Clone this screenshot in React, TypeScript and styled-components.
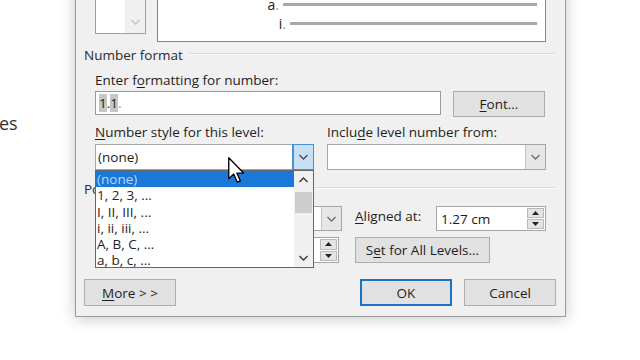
import React from 'react';
import styled, { createGlobalStyle } from 'styled-components';

const GlobalStyle = createGlobalStyle`
  html, body {
    margin: 0;
    padding: 0;
    background: #fff;
    overflow: hidden;
  }
  body {
    font-family: "Open Sans", "Noto Sans", "DejaVu Sans", sans-serif;
    font-size: 13.5px;
    color: #1a1a1a;
  }
  u {
    text-decoration-thickness: 1px;
    text-underline-offset: 2px;
  }
`;

const Page = styled.div`
  position: relative;
  display: flex;
  align-items: flex-start;
  width: 640px;
  height: 360px;
  overflow: hidden;
`;

const DocText = styled.div`
  width: 76px;
  margin-left: -1px;
  padding-top: 111px;
  font-size: 18px;
  color: #333;
`;

const Dialog = styled.div`
  width: 491px;
  margin-top: -40px;
  box-sizing: border-box;
  padding: 10px 9px 10px 8px;
  background: #f0f0f0;
  border: 1px solid #9b9b9b;
  box-shadow: 0 2px 14px rgba(0, 0, 0, 0.22);
  display: flex;
  flex-direction: column;
`;

const TopRow = styled.div`
  display: flex;
  align-items: flex-start;
  padding-left: 11px;
  gap: 11px;
`;

const LevelBox = styled.div`
  width: 51px;
  height: 63px;
  box-sizing: border-box;
  border: 1px solid #a0a0a0;
  background: #fff;
  display: flex;
  justify-content: flex-end;
`;

const LevelScroll = styled.div`
  width: 20px;
  background: #f0f0f0;
  display: flex;
  align-items: flex-end;
  justify-content: center;
  padding-bottom: 8px;
`;

const Preview = styled.div`
  width: 389px;
  height: 71px;
  box-sizing: border-box;
  border: 1px solid #858585;
  background: #fff;
  padding-top: 23px;
  display: flex;
  flex-direction: column;
`;

const PreviewRow = styled.div`
  display: flex;
  align-items: center;
  height: 19px;
`;

const Marker = styled.span<{ $w: number }>`
  width: ${(p) => p.$w}px;
  text-align: right;
  font-size: 14px;
  color: #222;
  span {
    color: #999;
  }
`;

const Bar = styled.div`
  flex: 1;
  height: 3px;
  margin-left: 4px;
  margin-right: 8px;
  background: #a8a8a8;
`;

const Heading = styled.div<{ $mt: number }>`
  display: flex;
  align-items: center;
  height: 18px;
  margin-top: ${(p) => p.$mt}px;
  margin-right: 1px;
  color: #2a2a2a;
  white-space: nowrap;

  &::after {
    content: '';
    flex: 1;
    height: 1px;
    margin-left: 6px;
    margin-top: -3px;
    background: #dadada;
    box-shadow: 0 1px 0 #fafafa;
  }
`;

const Label = styled.div<{ $mt?: number; $w?: number }>`
  height: 18px;
  line-height: 18px;
  margin-top: ${(p) => p.$mt ?? 0}px;
  width: ${(p) => (p.$w ? `${p.$w}px` : 'auto')};
  flex-shrink: 0;
  white-space: nowrap;
  color: #1e1e1e;
`;

const Row = styled.div<{ $mt: number; $gap?: number }>`
  display: flex;
  align-items: flex-start;
  margin-top: ${(p) => p.$mt}px;
  padding-left: 11px;
  gap: ${(p) => p.$gap ?? 0}px;
`;

const Gap = styled.div<{ $w: number }>`
  width: ${(p) => p.$w}px;
  flex-shrink: 0;
`;

const TextBox = styled.div<{ $w: number }>`
  width: ${(p) => p.$w}px;
  height: 24px;
  box-sizing: border-box;
  border: 1px solid #9a9a9a;
  background: #fff;
  display: flex;
  align-items: center;
  padding-left: 3px;
  flex-shrink: 0;
`;

const Field = styled.span`
  background: #c6c6c6;
`;

const Dot = styled.span`
  color: #888;
`;

const Button = styled.div<{ $w: number; $h?: number; $default?: boolean }>`
  width: ${(p) => p.$w}px;
  height: ${(p) => p.$h ?? 26}px;
  box-sizing: border-box;
  border: ${(p) => (p.$default ? '2px solid #1a73c9' : '1px solid #adadad')};
  background: #e1e1e1;
  display: flex;
  align-items: center;
  justify-content: center;
  flex-shrink: 0;
  color: #1e1e1e;
  white-space: nowrap;
`;

const ComboWrap = styled.div<{ $w: number; $z?: number }>`
  position: relative;
  z-index: ${(p) => p.$z ?? 0};
  width: ${(p) => p.$w}px;
  flex-shrink: 0;
`;

const Combo = styled.div<{ $h?: number }>`
  height: ${(p) => p.$h ?? 26}px;
  box-sizing: border-box;
  border: 1px solid #a5a5a5;
  background: #fff;
  display: flex;
  align-items: stretch;
`;

const ComboText = styled.div`
  flex: 1;
  display: flex;
  align-items: center;
  padding-left: 2px;
`;

const ComboButton = styled.div<{ $active?: boolean }>`
  width: 20px;
  box-sizing: border-box;
  border-left: 1px solid ${(p) => (p.$active ? '#4a90d9' : '#c2c2c2')};
  background: ${(p) => (p.$active ? '#c7e0f6' : '#e6e6e6')};
  outline: ${(p) => (p.$active ? '1px solid #4a90d9' : 'none')};
  display: flex;
  align-items: center;
  justify-content: center;
`;

const List = styled.div`
  position: absolute;
  top: 100%;
  left: 0;
  width: 219px;
  height: 98px;
  box-sizing: border-box;
  border: 1px solid #666;
  background: #fff;
  display: flex;
`;

const Items = styled.div`
  flex: 1;
  overflow: hidden;
`;

const Item = styled.div<{ $selected?: boolean }>`
  height: 16.3px;
  line-height: 16px;
  padding-left: 1px;
  white-space: nowrap;
  background: ${(p) => (p.$selected ? '#1a78d8' : 'transparent')};
  color: ${(p) => (p.$selected ? '#b3d7ff' : '#2a2222')};
`;

const ScrollBar = styled.div`
  width: 19px;
  background: #f0f0f0;
  display: flex;
  flex-direction: column;
  align-items: center;
`;

const ScrollArrow = styled.div`
  height: 18px;
  display: flex;
  align-items: center;
  justify-content: center;
`;

const Thumb = styled.div`
  width: 17px;
  height: 21px;
  margin-top: 3px;
  background: #cdcdcd;
`;

const Spacer = styled.div`
  flex: 1;
`;

const SpinBox = styled.div<{ $w: number; $h?: number }>`
  width: ${(p) => p.$w}px;
  height: ${(p) => p.$h ?? 25}px;
  box-sizing: border-box;
  border: 1px solid #a5a5a5;
  background: #fff;
  display: flex;
  flex-shrink: 0;
`;

const SpinText = styled.div`
  flex: 1;
  display: flex;
  align-items: center;
  padding-left: 4px;
`;

const SpinButtons = styled.div`
  width: 19px;
  display: flex;
  flex-direction: column;
  padding: 1px;
  gap: 1px;
  box-sizing: border-box;
`;

const SpinHalf = styled.div`
  flex: 1;
  background: #e4e4e4;
  border: 1px solid #b8b8b8;
  display: flex;
  align-items: center;
  justify-content: center;
`;

const Cursor = styled.svg`
  position: absolute;
  left: 228px;
  top: 157px;
  z-index: 10;
`;

const Chevron = ({ up, color = '#555', w = 9 }: { up?: boolean; color?: string; w?: number }) => (
  <svg width={w} height={6} viewBox="0 0 9 6">
    <polyline
      points={up ? '0.5,5 4.5,1 8.5,5' : '0.5,1 4.5,5 8.5,1'}
      fill="none"
      stroke={color}
      strokeWidth={1.3}
    />
  </svg>
);

const Tri = ({ up }: { up?: boolean }) => (
  <svg width={7} height={4} viewBox="0 0 7 4">
    <polygon points={up ? '0,4 3.5,0 7,4' : '0,0 3.5,4 7,0'} fill="#222" />
  </svg>
);

const Spinner = ({ w, h, value }: { w: number; h?: number; value?: string }) => (
  <SpinBox $w={w} $h={h}>
    <SpinText>{value}</SpinText>
    <SpinButtons>
      <SpinHalf>
        <Tri up />
      </SpinHalf>
      <SpinHalf>
        <Tri />
      </SpinHalf>
    </SpinButtons>
  </SpinBox>
);

const styles = ['(none)', '1, 2, 3, ...', 'I, II, III, ...', 'i, ii, iii, ...', 'A, B, C, ...', 'a, b, c, ...'];

export default function App() {
  return (
    <>
      <GlobalStyle />
      <Page>
        <DocText>es</DocText>
        <Dialog>
          <TopRow>
            <LevelBox>
              <LevelScroll>
                <Chevron color="#c4c4c4" />
              </LevelScroll>
            </LevelBox>
            <Preview>
              <PreviewRow>
                <Marker $w={121}>
                  a<span>.</span>
                </Marker>
                <Bar />
              </PreviewRow>
              <PreviewRow>
                <Marker $w={128}>
                  i<span>.</span>
                </Marker>
                <Bar />
              </PreviewRow>
            </Preview>
          </TopRow>

          <Heading $mt={4}>Number format</Heading>
          <Row $mt={7}>
            <Label>
              Enter f<u>o</u>rmatting for number:
            </Label>
          </Row>
          <Row $mt={2} $gap={12}>
            <TextBox $w={346}>
              <Field>1</Field>.<Field>1</Field>
              <Dot>.</Dot>
            </TextBox>
            <Button $w={92}>
              <u>F</u>ont...
            </Button>
          </Row>
          <Row $mt={6}>
            <Label $w={232}>
              <u>N</u>umber style for this level:
            </Label>
            <Label>
              Inclu<u>d</u>e level number from:
            </Label>
          </Row>
          <Row $mt={3} $gap={13}>
            <ComboWrap $w={219} $z={2}>
              <Combo>
                <ComboText>(none)</ComboText>
                <ComboButton $active>
                  <Chevron color="#4a4a4a" />
                </ComboButton>
              </Combo>
              <List>
                <Items>
                  {styles.map((s, i) => (
                    <Item key={s} $selected={i === 0}>
                      {s}
                    </Item>
                  ))}
                </Items>
                <ScrollBar>
                  <ScrollArrow>
                    <Chevron up color="#333" />
                  </ScrollArrow>
                  <Thumb />
                  <Spacer />
                  <ScrollArrow>
                    <Chevron color="#333" />
                  </ScrollArrow>
                </ScrollBar>
              </List>
            </ComboWrap>
            <ComboWrap $w={219} $z={1}>
              <Combo>
                <ComboText />
                <ComboButton>
                  <Chevron color="#6a6a6a" />
                </ComboButton>
              </Combo>
            </ComboWrap>
          </Row>

          <Heading $mt={10}>Position</Heading>
          <Row $mt={8}>
            <Gap $w={120} />
            <ComboWrap $w={127}>
              <Combo $h={25}>
                <ComboText />
                <ComboButton>
                  <Chevron color="#6a6a6a" />
                </ComboButton>
              </Combo>
            </ComboWrap>
            <Label $w={81} style={{ marginLeft: 13, marginTop: 1 }}>
              <u>A</u>ligned at:
            </Label>
            <Spinner w={110} value="1.27 cm" />
          </Row>
          <Row $mt={6}>
            <Gap $w={120} />
            <Spinner w={124} h={26} />
            <Button $w={135} style={{ marginLeft: 16 }}>
              S<u>e</u>t for All Levels...
            </Button>
          </Row>

          <Row $mt={16} style={{ paddingLeft: 0 }}>
            <Button $w={92} $h={27}>
              <u>M</u>ore &gt; &gt;
            </Button>
            <Spacer />
            <Button $w={92} $h={27} $default>
              OK
            </Button>
            <Button $w={92} $h={27} style={{ marginLeft: 12 }}>
              Cancel
            </Button>
          </Row>
        </Dialog>

        <Cursor width="18" height="27" viewBox="0 0 12 18">
          <path
            d="M0.5 0.5 L0.5 14.5 L3.8 11.4 L6.2 16.8 L8.2 15.9 L5.9 10.7 L10.4 10.7 Z"
            fill="#fff"
            stroke="#000"
            strokeWidth="0.9"
            strokeLinejoin="round"
          />
        </Cursor>
      </Page>
    </>
  );
}
